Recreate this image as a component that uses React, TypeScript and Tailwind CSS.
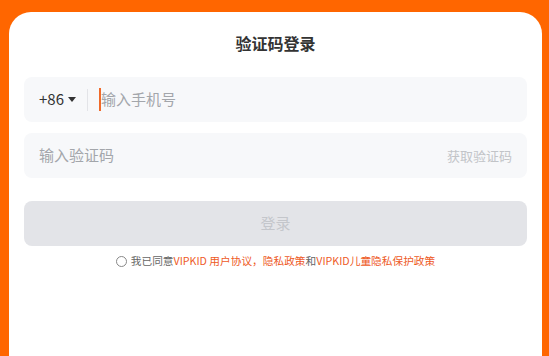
import { useState } from "react";

const FONT = { fontFamily: '"Noto Sans CJK SC", "Noto Sans", sans-serif' };

export default function App() {
  const [phone, setPhone] = useState("");
  const [code, setCode] = useState("");
  const [agreed, setAgreed] = useState(false);

  return (
    <div className="min-h-screen bg-[#ff6600] pt-[12px] pl-[9px]" style={FONT}>
      <div className="flex min-h-[344px] w-[533px] flex-col rounded-t-[22px] bg-white px-[15px]">
        <h1 className="mt-[20px] text-center text-[16px] leading-[22px] font-bold text-[#333]">
          验证码登录
        </h1>

        <div className="mt-[23px] flex h-[45px] items-center rounded-[8px] bg-[#f7f8fa] px-[15px]">
          <button className="flex items-center gap-[4px] text-[15px] text-[#333]">
            +86
            <svg width="8" height="5" viewBox="0 0 8 5">
              <path d="M0 0h8L4 5z" fill="#333" />
            </svg>
          </button>
          <span className="mx-[11px] h-[22px] w-px bg-[#e3e4e8]" />
          <input
            value={phone}
            onChange={(e) => setPhone(e.target.value)}
            placeholder="输入手机号"
            className="flex-1 border-l-2 border-[#f06a2a] bg-transparent text-[15px] text-[#333] outline-none placeholder:text-[#a3a6ab]"
          />
        </div>

        <div className="mt-[11px] flex h-[45px] items-center rounded-[8px] bg-[#f7f8fa] px-[15px]">
          <input
            value={code}
            onChange={(e) => setCode(e.target.value)}
            placeholder="输入验证码"
            className="flex-1 bg-transparent text-[15px] text-[#333] outline-none placeholder:text-[#a3a6ab]"
          />
          <button className="text-[13px] text-[#c2c4c8]">获取验证码</button>
        </div>

        <button className="mt-[23px] h-[45px] rounded-[8px] bg-[#e3e4e8] text-[15px] text-[#c4c6cb]">
          登录
        </button>

        <label className="mt-[8px] flex items-center justify-center gap-[4px] text-[10.7px] leading-[14px] text-[#666]">
          <span
            onClick={() => setAgreed(!agreed)}
            className={`h-[11px] w-[11px] rounded-full border ${agreed ? "border-[#f05a1e] bg-[#f05a1e]" : "border-[#888]"}`}
          />
          <span>
            我已同意<span className="text-[#ee5a1f]">VIPKID 用户协议，隐私政策</span>和
            <span className="text-[#ee5a1f]">VIPKID儿童隐私保护政策</span>
          </span>
        </label>
      </div>
    </div>
  );
}
